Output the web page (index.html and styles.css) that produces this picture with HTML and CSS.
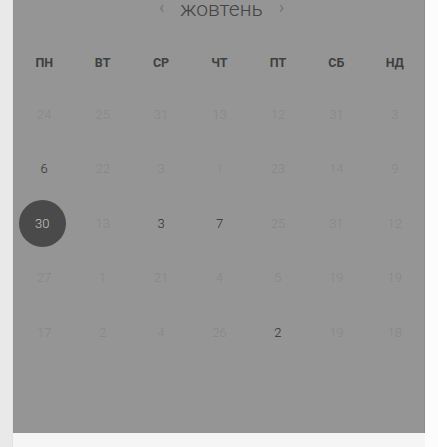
FILE: index.html
```html
<!DOCTYPE html>
<html lang="uk">
<head>
    <meta charset="UTF-8">
    <title>Календар</title>
    <link rel="stylesheet" href="styles.css">
</head>
<body>
    <div class="page">
        <div class="side"></div>
        <div class="main">
            <div class="panel">
                <div class="month">
                    <span class="arrow">‹</span>
                    <span class="month-name">жовтень</span>
                    <span class="arrow">›</span>
                </div>
                <div class="week">
                    <span>ПН</span><span>ВТ</span><span>СР</span><span>ЧТ</span><span>ПТ</span><span>СБ</span><span>НД</span>
                </div>
                <div class="days">
                    <span>24</span><span>25</span><span>31</span><span>13</span><span>12</span><span>31</span><span>3</span>
                    <span class="on">6</span><span>22</span><span>3</span><span>1</span><span>23</span><span>14</span><span>9</span>
                    <span class="picked"><b>30</b></span><span>13</span><span class="on">3</span><span class="on">7</span><span>25</span><span>31</span><span>12</span>
                    <span>27</span><span>1</span><span>21</span><span>4</span><span>5</span><span>19</span><span>19</span>
                    <span>17</span><span>2</span><span>4</span><span>26</span><span class="on">2</span><span>19</span><span>18</span>
                </div>
            </div>
            <div class="below"></div>
        </div>
    </div>
</body>
</html>
```

FILE: styles.css
```css
*{
    margin: 0;
    padding: 0;
    box-sizing: border-box;
}
html,body{
    height: 100%;
}
body{
    background: #fcfcfc;
    font-family: Roboto, "Noto Sans", sans-serif;
    overflow: hidden;
}
.page{
    display: flex;
    height: 100%;
}
.side{
    width: 13px;
    background: #e9e9e9;
    border-right: 1px solid #e2e2e2;
}
.main{
    width: 412px;
    display: flex;
    flex-direction: column;
}
.panel{
    height: 433px;
    background: #959595;
    border-right: 1px solid #8c8c8c;
    padding-left: 2px;
}
.below{
    flex: 1;
    background: #f5f5f5;
}
.month{
    height: 20px;
    display: flex;
    justify-content: center;
    align-items: flex-start;
    gap: 16px;
    padding-left: 4px;
}
.month-name{
    font-size: 21px;
    font-weight: 300;
    color: #444;
    line-height: 18px;
}
.arrow{
    font-size: 18px;
    color: #767676;
    line-height: 14px;
}
.week{
    display: grid;
    grid-template-columns: repeat(7, 1fr);
    margin-top: 32px;
    height: 20px;
    align-items: center;
}
.week span{
    text-align: center;
    font-size: 12.5px;
    font-weight: 700;
    color: #3f3f3f;
}
.days{
    display: grid;
    grid-template-columns: repeat(7, 1fr);
    grid-auto-rows: 54.5px;
    margin-top: 15px;
}
.days span{
    display: flex;
    justify-content: center;
    align-items: center;
    font-size: 13px;
    font-weight: 300;
    color: #878787;
}
.days span.on{
    color: #2e2e2e;
}
.days span.picked b{
    width: 47px;
    height: 47px;
    border-radius: 50%;
    background: #4a4a4a;
    color: #c4c4c4;
    font-weight: 300;
    display: flex;
    justify-content: center;
    align-items: center;
    margin-left: -4px;
}
```
